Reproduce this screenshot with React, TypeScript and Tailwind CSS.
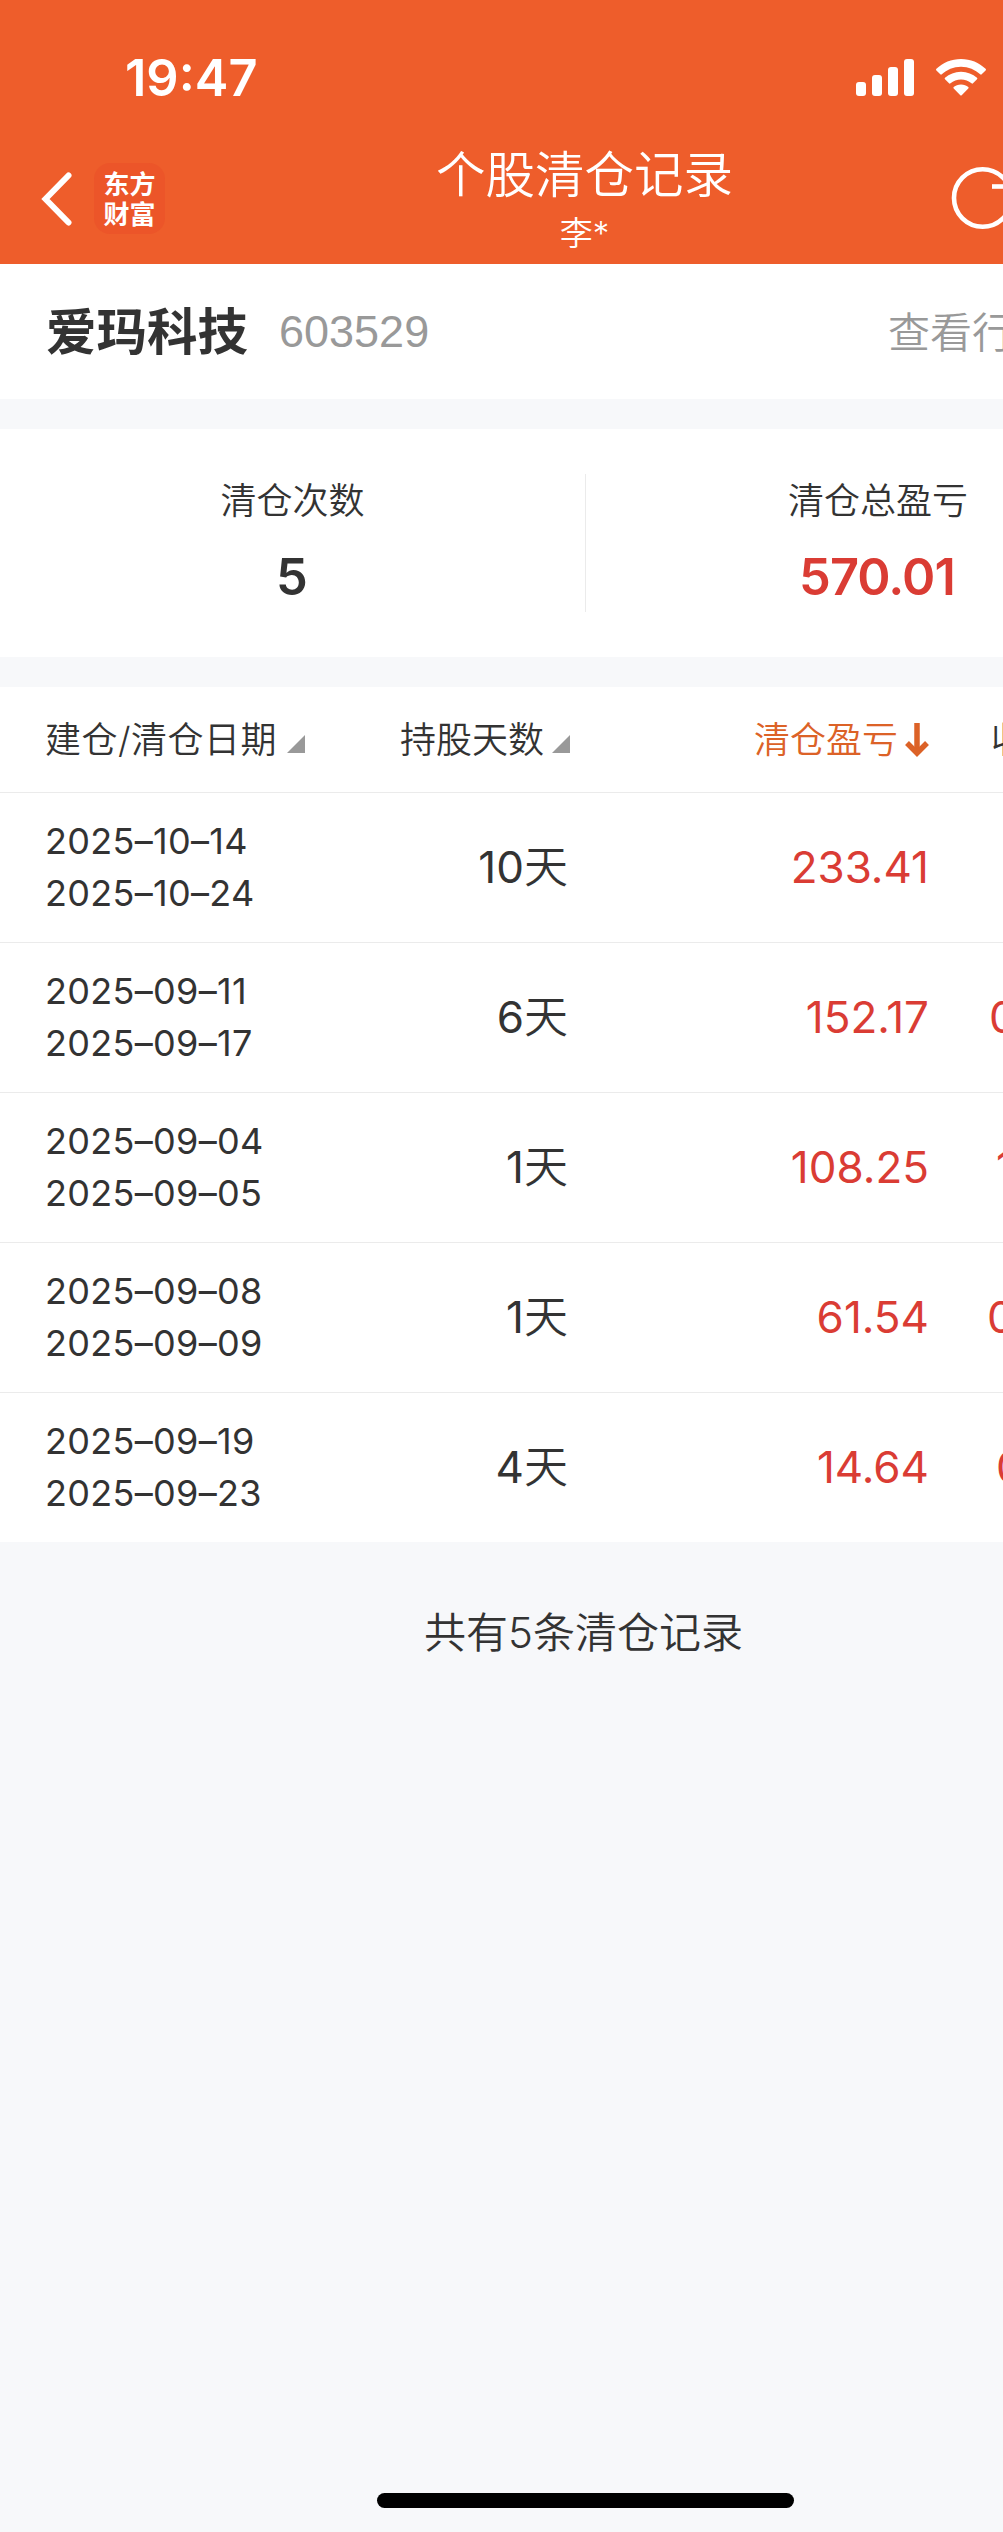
import React from 'react';
import clsx from 'clsx';

type ClearRecord = {
  openDate: string;
  closeDate: string;
  days: number;
  profit: string;
  rate: string;
  rateClass: string;
};

const records: ClearRecord[] = [
  { openDate: '2025–10–14', closeDate: '2025–10–24', days: 10, profit: '233.41', rate: '', rateClass: '' },
  { openDate: '2025–09–11', closeDate: '2025–09–17', days: 6, profit: '152.17', rate: '0', rateClass: 'pl-[60px]' },
  { openDate: '2025–09–04', closeDate: '2025–09–05', days: 1, profit: '108.25', rate: '1', rateClass: 'pl-[67px]' },
  { openDate: '2025–09–08', closeDate: '2025–09–09', days: 1, profit: '61.54', rate: '0', rateClass: 'pl-[58px]' },
  { openDate: '2025–09–19', closeDate: '2025–09–23', days: 4, profit: '14.64', rate: '0', rateClass: 'pl-[67px]' },
];

const SignalIcon = () => (
  <svg width="58" height="37" viewBox="0 0 58 37" fill="currentColor">
    <rect x="0" y="23" width="10" height="14" rx="3" />
    <rect x="16" y="16" width="10" height="21" rx="3" />
    <rect x="32" y="8" width="10" height="29" rx="3" />
    <rect x="48" y="0" width="10" height="37" rx="3" />
  </svg>
);

const WifiIcon = () => (
  <svg width="50" height="37" viewBox="0 0 50 37" fill="currentColor">
    <path d="M25 0C34.5 0 43.200 3.700 49.600 9.800Q50.400 10.600 49.600 11.400L45.700 15.300Q45 16 44.200 15.300C39.200 10.600 32.500 7.700 25 7.700S10.800 10.600 5.800 15.300Q5 16 4.300 15.300L.4 11.400Q-.4 10.600 .4 9.800C6.800 3.700 15.500 0 25 0Z" />
    <path d="M25 12.700C31.300 12.700 36.700 15 41 18.800Q41.800 19.500 41 20.300L37 24.300Q36.300 25 35.500 24.300C32.700 21.900 29 20.400 25 20.400S17.300 21.900 14.500 24.300Q13.700 25 13 24.300L9 20.300Q8.200 19.500 9 18.800C13.300 15 18.700 12.700 25 12.700Z" />
    <path d="M25 25.500C27.900 25.500 30.400 26.500 32.300 28.100Q33 28.800 32.300 29.500L25.700 36.200Q25 36.900 24.300 36.200L17.700 29.500Q17 28.800 17.700 28.100C19.600 26.500 22.100 25.500 25 25.500Z" />
  </svg>
);

const BackIcon = () => (
  <svg width="32" height="54" viewBox="0 0 32 54" fill="none" stroke="currentColor" strokeWidth="6">
    <path d="M27.500 3.500L4.500 27L27.500 50.500" strokeLinecap="round" strokeLinejoin="miter" />
  </svg>
);

const RefreshIcon = () => (
  <svg width="64" height="64" viewBox="0 0 64 64" fill="none" stroke="currentColor" strokeWidth="4.600">
    <circle cx="31.700" cy="32" r="28.700" />
    <path d="M41 20.500H64" />
  </svg>
);

const SortTriangle = () => (
  <svg className="mt-[8px] shrink-0" width="18" height="18" viewBox="0 0 18 18" fill="#999999">
    <path d="M18 0V18H0Z" />
  </svg>
);

const SortArrow = () => (
  <svg className="shrink-0" width="24" height="34" viewBox="0 0 24 34" fill="none" stroke="currentColor" strokeWidth="5.500">
    <path d="M12 0V30" />
    <path d="M2 20L12 30L22 20" />
  </svg>
);

const Header: React.FC = () => (
  <header className="h-[264px] bg-[#ee5d2b] text-white">
    <div className="flex h-[132px] items-start pl-[125px] pt-[48px]">
      <span className="w-[731px] text-[50.500px] font-semibold leading-[60px]">19:47</span>
      <div className="flex shrink-0 gap-[22px] pt-[11px]">
        <SignalIcon />
        <WifiIcon />
      </div>
    </div>
    <div className="grid h-[132px] grid-cols-[435px_299px_1fr]">
      <div className="flex items-center gap-[21px] pb-[2px] pl-[41px] pt-[3px]">
        <BackIcon />
        <div className="flex size-[71px] flex-col items-center justify-center rounded-[16px] bg-[#ec5529] pt-[2px] text-[26px] font-bold leading-[30px]">
          <span>东方</span>
          <span>财富</span>
        </div>
      </div>
      <div className="flex flex-col items-center pt-[13px]">
        <h1 className="whitespace-nowrap text-[49.500px] leading-[60px]">个股清仓记录</h1>
        <span className="mt-[11px] text-[33px] leading-[34px]">李*</span>
      </div>
      <div className="pl-[217px] pt-[34px]">
        <RefreshIcon />
      </div>
    </div>
  </header>
);

const Stat = ({ label, value, className }: { label: string; value: string; className?: string }) => (
  <div className={clsx('flex h-[138px] flex-col items-center pt-[2px]', className)}>
    <span className="text-[36px] leading-[50px]">{label}</span>
    <span className="mt-[21px] pr-[2px] text-[50.500px] font-semibold leading-[60px] tracking-[-0.9px]">{value}</span>
  </div>
);

const RecordRow = ({ record }: { record: ClearRecord }) => (
  <div className="grid h-[150px] grid-cols-[305px_265px_359px_1fr] items-center border-b border-[#ebebeb] pb-px text-[44px] font-[375] last:h-[149px] last:border-b-0">
    <div className="flex flex-col pl-[45px] text-[36px] leading-[52px] tracking-[0.300px]">
      <span>{record.openDate}</span>
      <span>{record.closeDate}</span>
    </div>
    <span className="pr-[2px] text-right">
      {record.days}
      <span className="font-[350]">天</span>
    </span>
    <span className="text-right text-[#da3c34]">{record.profit}</span>
    <span className={clsx('text-[#da3c34]', record.rateClass)}>{record.rate}</span>
  </div>
);

const App: React.FC = () => {
  return (
    <div className="h-[2532px] w-[1003px] overflow-hidden bg-[#f7f8fa] font-['Inter','Noto_Sans_CJK_SC',sans-serif] font-[350] text-[#333333]">
      {/* The screen is 1170 wide, the viewport cuts off its right side */}
      <div className="flex h-full w-[1170px] flex-col">
        <Header />

        <section className="flex h-[135px] items-center bg-white pl-[46px]">
          <h2 className="pt-px text-[50.500px] font-bold">爱玛科技</h2>
          <span className="ml-[31px] w-[609px] font-['Liberation_Sans',sans-serif] text-[45px] text-[#999999]">603529</span>
          <span className="whitespace-nowrap pt-px text-[42px] text-[#999999]">查看行</span>
        </section>

        <section className="mt-[30px] grid h-[228px] grid-cols-[586px_584px] bg-white pt-[45px]">
          <Stat label="清仓次数" value={String(records.length)} className="border-r border-[#ebebeb]" />
          <Stat label="清仓总盈亏" value="570.01" className="text-[#da3c34] [&>span:first-child]:text-[#333333]" />
        </section>

        <section className="mt-[30px] bg-white">
          <div className="grid h-[106px] grid-cols-[305px_265px_359px_1fr] items-center border-b border-[#ebebeb] pt-px text-[36px]">
            <div className="flex items-center justify-between whitespace-nowrap pl-[45px] tracking-[0.500px]">
              <span>建仓/清仓日期</span>
              <SortTriangle />
            </div>
            <div className="flex items-center justify-end gap-[8px]">
              <span>持股天数</span>
              <SortTriangle />
            </div>
            <div className="flex items-center justify-end gap-[7px] text-[#dc6227]">
              <span>清仓盈亏</span>
              <SortArrow />
            </div>
            <span className="pl-[62px]">收</span>
          </div>
          <div>
            {records.map((record) => (
              <RecordRow key={record.openDate} record={record} />
            ))}
          </div>
        </section>

        <p className="mt-[61px] pr-[3px] text-center text-[42px] leading-[60px]">
          共有{records.length}条清仓记录
        </p>

        <div className="mx-auto mb-[24px] mt-auto h-[15px] w-[417px] rounded-full bg-black" />
      </div>
    </div>
  );
};

export default App;
